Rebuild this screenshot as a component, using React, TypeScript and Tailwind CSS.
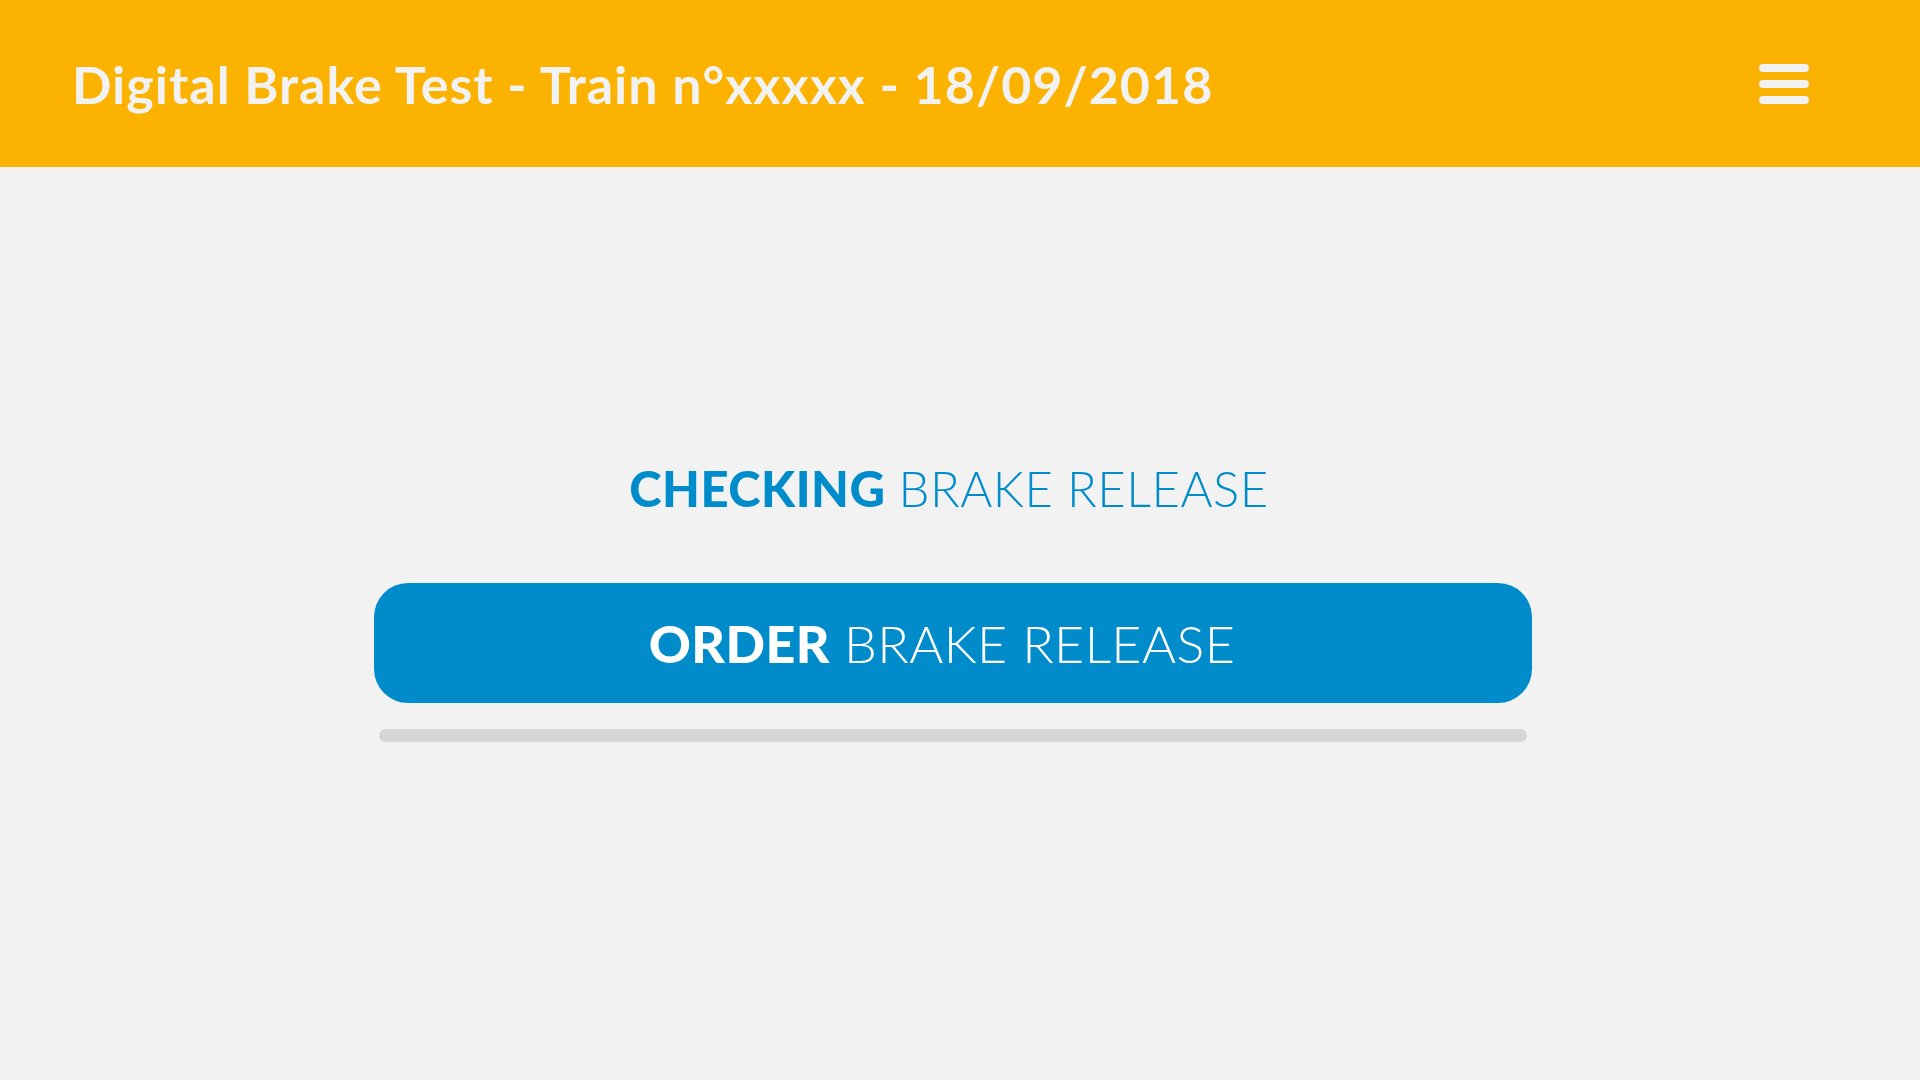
export default function App() {
  return (
    <div className="min-h-screen w-full bg-[#f2f2f2] flex flex-col" style={{ fontFamily: 'Lato, "Noto Sans", sans-serif' }}>
      <header className="h-[167px] bg-[#fbb200] flex items-center justify-between pl-[72px] pr-[111px]">
        <h1 className="text-[52px] font-bold leading-none text-[#f2f2f2] tracking-[1px]">
          Digital Brake Test - Train n°xxxxx - 18/09/2018
        </h1>
        <button className="flex flex-col gap-[8px]" aria-label="Menu">
          <span className="block w-[50px] h-[8px] rounded-[4px] bg-[#f2f2f2]" />
          <span className="block w-[50px] h-[8px] rounded-[4px] bg-[#f2f2f2]" />
          <span className="block w-[50px] h-[8px] rounded-[4px] bg-[#f2f2f2]" />
        </button>
      </header>

      <main className="flex flex-col w-[1158px] ml-[374px] pt-[297px]">
        <p className="text-center text-[49px] leading-none text-[#008ccb] tracking-[0.5px] pr-[8px]">
          <span className="font-black">CHECKING</span> <span className="font-light">BRAKE RELEASE</span>
        </p>
        <button className="mt-[70px] h-[120px] rounded-[34px] bg-[#008ccb] flex items-center justify-center text-[52px] leading-none text-white tracking-[0.4px] pr-[22px]">
          <span className="font-black">ORDER</span>
          <span className="font-light ml-[14px]">BRAKE RELEASE</span>
        </button>
        <div className="mt-[26px] mx-[5px] h-[13px] rounded-full bg-[#d6d6d6]" />
      </main>
    </div>
  );
}
